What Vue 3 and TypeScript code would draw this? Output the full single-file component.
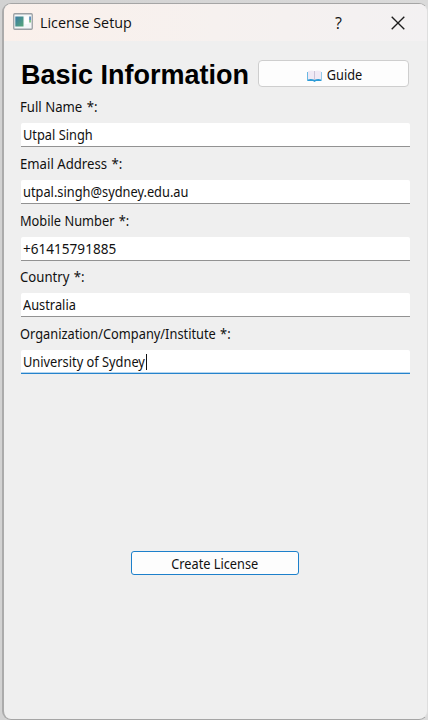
<script setup lang="ts">
import { ref } from 'vue'

interface Field {
  id: string
  label: string
  value: string
  active?: boolean
}

const fields = ref<Field[]>([
  { id: 'name', label: 'Full Name', value: 'Utpal Singh' },
  { id: 'email', label: 'Email Address', value: 'utpal.singh@sydney.edu.au' },
  { id: 'mobile', label: 'Mobile Number', value: '+61415791885' },
  { id: 'country', label: 'Country', value: 'Australia' },
  { id: 'organization', label: 'Organization/Company/Institute', value: 'University of Sydney', active: true },
])
</script>

<template>
  <div class="desktop">
    <main class="window">
      <header class="titlebar">
        <svg class="app-icon" width="20" height="17" viewBox="0 0 20 17">
          <defs>
            <linearGradient id="pane" x1="0" y1="0" x2="1" y2="1">
              <stop offset="0" stop-color="#397aa4" />
              <stop offset="1" stop-color="#58a879" />
            </linearGradient>
          </defs>
          <rect x=".75" y=".75" width="18.5" height="15.5" rx="1" fill="#f4f7f8" stroke="#9a9fa3" stroke-width="1.3" />
          <rect x="2.3" y="3.5" width="8.2" height="10" fill="url(#pane)" />
          <rect x="11.5" y="3.5" width="4" height="7.5" fill="#fff" />
          <rect x="16.3" y="3.5" width="1.5" height="3.5" fill="#3e78ad" />
          <rect x="16.3" y="7" width="1.5" height="2.5" fill="#60b36d" />
        </svg>
        <span class="caption">License Setup</span>
        <span class="help">?</span>
        <svg class="close" width="14" height="14" viewBox="0 0 14 14">
          <path d="M.7.7 13.3 13.3M13.3.7.7 13.3" fill="none" stroke="#1c1c1c" stroke-width="1.35" />
        </svg>
      </header>
      <section class="content">
        <div class="heading-row">
          <h1>Basic Information</h1>
          <button class="guide">
            <svg width="15" height="12" viewBox="0 0 15 12">
              <path d="M.3 2h14.2v9.1H9L7.5 12 6 11.1H.3z" fill="#2c9bd6" />
              <path d="M1 1Q4.5-.2 7.5 1 10.5-.2 14 1v8.4Q10.5 8.6 7.5 9.8 4.5 8.6 1 9.4z" fill="#f0e9f5" />
              <path d="M7.5 1v9" stroke="#c6bdd2" stroke-width=".9" />
            </svg>
            <span>Guide</span>
          </button>
        </div>
        <div v-for="field in fields" :key="field.id" class="field">
          <label :class="field.id">{{ field.label }} <b>*</b>:</label>
          <div class="input" :class="{ active: field.active }">
            <span :class="field.id">{{ field.value }}</span><i v-if="field.active" class="caret" />
          </div>
        </div>
        <button class="create"><span>Create License</span></button>
      </section>
    </main>
  </div>
</template>

<style>
body {
  margin: 0;
}
</style>

<style scoped>
.desktop {
  box-sizing: border-box;
  width: 428px;
  height: 720px;
  padding: 3px 0 0 2px;
  background: linear-gradient(90deg, #d2d2d2, #dadada);
  font-family: "Noto Sans", "Open Sans", sans-serif;
  color: #111;
  overflow: hidden;
}
.window {
  box-sizing: border-box;
  width: 426px;
  height: 717px;
  border: 1px solid #a5a5a5;
  border-left: 2px solid #ababab;
  border-right-color: #dedede;
  border-radius: 9px;
  background: #efefef;
  overflow: hidden;
}
.titlebar {
  display: flex;
  align-items: center;
  height: 37px;
  padding-left: 9px;
  background: linear-gradient(90deg, #faf0eb, #f6f1ef 50%, #f3f1f2);
}
.app-icon {
  margin-bottom: 2px;
}
.caption {
  width: 92px;
  margin-left: 7px;
  font: 14.3px/20px "Open Sans", sans-serif;
  white-space: nowrap;
}
.help {
  width: 9px;
  margin-left: 203px;
  font: 16px/20px "Open Sans", sans-serif;
}
.close {
  margin-left: 47px;
}
.content {
  padding: 17px 17px 0 17px;
}
.heading-row {
  display: flex;
  height: 36px;
}
h1 {
  width: 237px;
  margin: 0;
  font: bold 27px/34px "Liberation Sans", Arial, sans-serif;
  color: #000;
  white-space: nowrap;
}
button {
  box-sizing: border-box;
  display: flex;
  align-items: center;
  justify-content: center;
  padding: 0;
  font: 14px/20px "Noto Sans", sans-serif;
  color: #111;
  background: #fdfdfd;
  white-space: nowrap;
}
button span {
  transform: scaleX(0.91);
}
.guide {
  width: 151px;
  height: 27px;
  margin-top: 2px;
  gap: 3px;
  border: 1px solid #cecece;
  border-radius: 4px;
}
.guide svg {
  margin-top: 4px;
  margin-left: 4px;
}
.guide span {
  margin-top: 2px;
}
.field {
  height: 56.75px;
}
label,
.input span {
  transform-origin: left center;
  transform: scaleX(0.915);
}
label {
  display: block;
  width: max-content;
  height: 29px;
  margin-left: -1px;
  font-size: 14px;
  line-height: 26px;
  white-space: nowrap;
}
label b {
  margin-left: 1px;
  font-weight: normal;
}
label.name,
label.email,
label.country {
  transform: scaleX(0.94);
}
.input {
  box-sizing: border-box;
  display: flex;
  align-items: center;
  width: 389px;
  height: 24px;
  padding: 1px 0 0 2px;
  border-bottom: 1px solid #929292;
  border-radius: 2px 2px 0 0;
  background: #fff;
  font-size: 14px;
  line-height: 20px;
  white-space: nowrap;
}
.input span.mobile {
  transform: scaleX(0.97);
}
.input.active {
  border-bottom: 1px solid #2583cc;
  box-shadow: inset 0 -1px #b5d5ee;
}
.caret {
  width: 1px;
  height: 16px;
  margin-left: -10px;
  background: #111;
}
.create {
  width: 168px;
  height: 24px;
  margin: 173px 0 0 110px;
  border: 1px solid #1d80cb;
  border-radius: 3px;
}
.create span {
  margin-top: 2px;
}
</style>
